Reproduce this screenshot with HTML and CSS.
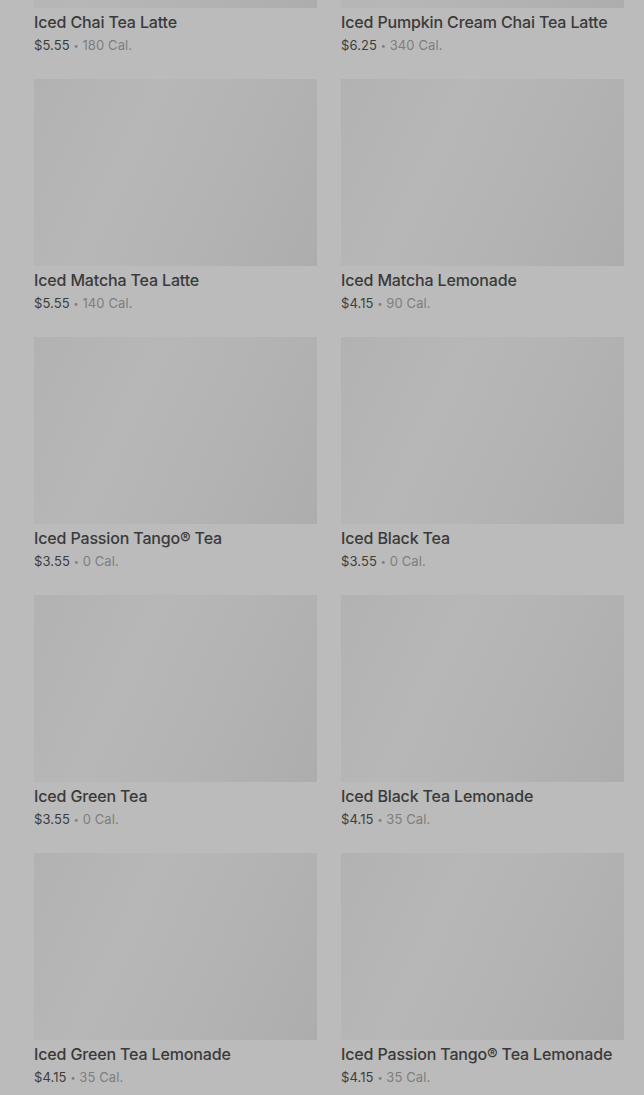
FILE: index.html
```html
<!DOCTYPE html>
<html lang="en">
  <head>
    <meta charset="UTF-8" />
    <meta name="viewport" content="width=device-width, initial-scale=1.0" />
    <title>Iced Teas</title>
    <link rel="stylesheet" href="styles.css">
  </head>
  <body>
    <div class="menu-grid">
      <div class="product">
        <div class="product-image"></div>
        <div class="product-name">Iced Chai Tea Latte</div>
        <div class="product-meta"><span class="price">$5.55</span> <span class="dot">&bull;</span> 180 Cal.</div>
      </div>
      <div class="product">
        <div class="product-image"></div>
        <div class="product-name">Iced Pumpkin Cream Chai Tea Latte</div>
        <div class="product-meta"><span class="price">$6.25</span> <span class="dot">&bull;</span> 340 Cal.</div>
      </div>
      <div class="product">
        <div class="product-image"></div>
        <div class="product-name">Iced Matcha Tea Latte</div>
        <div class="product-meta"><span class="price">$5.55</span> <span class="dot">&bull;</span> 140 Cal.</div>
      </div>
      <div class="product">
        <div class="product-image"></div>
        <div class="product-name">Iced Matcha Lemonade</div>
        <div class="product-meta"><span class="price">$4.15</span> <span class="dot">&bull;</span> 90 Cal.</div>
      </div>
      <div class="product">
        <div class="product-image"></div>
        <div class="product-name">Iced Passion Tango&reg; Tea</div>
        <div class="product-meta"><span class="price">$3.55</span> <span class="dot">&bull;</span> 0 Cal.</div>
      </div>
      <div class="product">
        <div class="product-image"></div>
        <div class="product-name">Iced Black Tea</div>
        <div class="product-meta"><span class="price">$3.55</span> <span class="dot">&bull;</span> 0 Cal.</div>
      </div>
      <div class="product">
        <div class="product-image"></div>
        <div class="product-name">Iced Green Tea</div>
        <div class="product-meta"><span class="price">$3.55</span> <span class="dot">&bull;</span> 0 Cal.</div>
      </div>
      <div class="product">
        <div class="product-image"></div>
        <div class="product-name">Iced Black Tea Lemonade</div>
        <div class="product-meta"><span class="price">$4.15</span> <span class="dot">&bull;</span> 35 Cal.</div>
      </div>
      <div class="product">
        <div class="product-image"></div>
        <div class="product-name">Iced Green Tea Lemonade</div>
        <div class="product-meta"><span class="price">$4.15</span> <span class="dot">&bull;</span> 35 Cal.</div>
      </div>
      <div class="product">
        <div class="product-image"></div>
        <div class="product-name">Iced Passion Tango&reg; Tea Lemonade</div>
        <div class="product-meta"><span class="price">$4.15</span> <span class="dot">&bull;</span> 35 Cal.</div>
      </div>
    </div>
  </body>
</html>
```

FILE: styles.css
```css
body {
  font-family: Inter, "Noto Sans", sans-serif;
  background-color: #bbbbbb;
  color: #3a3a3a;
  margin: 0;
  overflow: hidden;
}

.menu-grid {
  display: grid;
  grid-template-columns: 283px 283px;
  column-gap: 24px;
  row-gap: 24px;
  margin-top: -179px;
  padding-left: 34px;
}

.product-image {
  height: 187px;
  background: linear-gradient(115deg, #b2b2b2 0%, #b7b7b7 35%, #b3b3b3 65%, #adadad 100%);
}

.product-name {
  margin-top: 4px;
  font-size: 16px;
  font-weight: 500;
  line-height: 20px;
  letter-spacing: -0.15px;
}

.product-meta {
  margin-top: 3px;
  height: 20px;
  font-size: 13px;
  line-height: 20px;
  color: #7e7e7e;
  letter-spacing: 0.1px;
}

.price {
  color: #3d3d3d;
}

.dot {
  font-size: 9px;
  line-height: 1;
  vertical-align: 1px;
}
```
